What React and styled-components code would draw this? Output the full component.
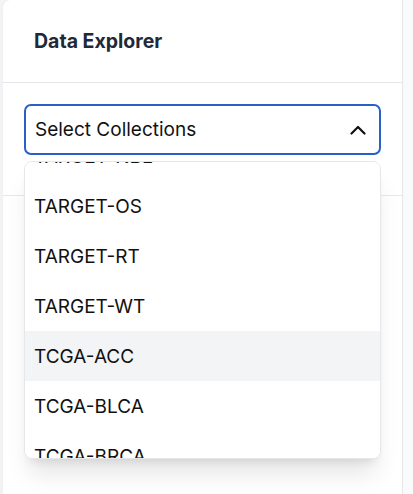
import { useLayoutEffect, useRef } from "react";
import styled, { createGlobalStyle } from "styled-components";

const GlobalStyle = createGlobalStyle`
  html, body {
    margin: 0;
    padding: 0;
    background: #f3f4f6;
    font-family: Inter, "Noto Sans", "Liberation Sans", sans-serif;
  }
  * {
    box-sizing: border-box;
  }
`;

const Page = styled.div`
  display: flex;
  height: 494px;
  padding-left: 3px;
  background: #f3f4f6;
  overflow: hidden;
`;

const Sidebar = styled.aside`
  width: 400px;
  flex-shrink: 0;
  display: flex;
  flex-direction: column;
  background: #ffffff;
  border-right: 1px solid #e5e7eb;
  border-top-left-radius: 8px;
  box-shadow: 0 0 4px rgba(0, 0, 0, 0.04);
`;

const Main = styled.main`
  flex: 1;
  background: #f9fafb;
`;

const Header = styled.header`
  height: 83px;
  display: flex;
  align-items: center;
  padding: 0 31px 1px;
  border-bottom: 1px solid #e5e7eb;
`;

const Title = styled.h1`
  margin: 0;
  font-size: 19.5px;
  font-weight: 700;
  color: #1f2937;
`;

const Section = styled.section`
  position: relative;
  padding: 21px 21px 40px;
  border-bottom: 1px solid #e5e7eb;
`;

const SelectBox = styled.button`
  width: 357px;
  height: 51px;
  display: flex;
  align-items: center;
  justify-content: space-between;
  padding: 0 13px 0 9px;
  background: #ffffff;
  border: 2px solid #2b5fc7;
  border-radius: 7px;
  font-family: inherit;
  font-size: 19px;
  color: #111111;
  cursor: pointer;
`;

const Chevron = styled.svg`
  width: 16px;
  height: 10px;
`;

const Dropdown = styled.ul`
  position: absolute;
  top: 78px;
  left: 21px;
  width: 357px;
  height: 298px;
  margin: 0;
  padding: 0;
  list-style: none;
  background: #ffffff;
  border: 1px solid #e5e7eb;
  border-radius: 8px;
  box-shadow: 0 20px 25px -5px rgba(0, 0, 0, 0.1),
    0 8px 10px -6px rgba(0, 0, 0, 0.1);
  overflow: hidden;
  z-index: 10;
`;

const Option = styled.li`
  height: 50px;
  display: flex;
  align-items: center;
  padding: 0 9px;
  font-size: 19px;
  color: #111111;
  background: ${(p) => (p.$active ? "#f3f4f6" : "#ffffff")};
  cursor: pointer;
`;

const collections = [
  "4D-Lung",
  "ACRIN-6698",
  "CPTAC-LUAD",
  "LIDC-IDRI",
  "NSCLC-Radiomics",
  "TARGET-AML",
  "TARGET-NBL",
  "TARGET-OS",
  "TARGET-RT",
  "TARGET-WT",
  "TCGA-ACC",
  "TCGA-BLCA",
  "TCGA-BRCA",
  "TCGA-CESC",
  "TCGA-COAD",
];

function App() {
  const listRef = useRef(null);

  // keep the list scrolled to where TARGET-OS sits near the top
  useLayoutEffect(() => {
    const list = listRef.current;
    if (!list) return;
    const target = list.querySelector('[data-name="TARGET-OS"]');
    if (target) list.scrollTop = target.offsetTop - 19;
  }, []);

  return (
    <>
      <GlobalStyle />
      <Page>
        <Sidebar>
          <Header>
            <Title>Data Explorer</Title>
          </Header>
          <Section>
            <SelectBox type="button">
              <span>Select Collections</span>
              <Chevron viewBox="0 0 16 10" fill="none">
                <path
                  d="M1.5 8.5 L8 2 L14.5 8.5"
                  stroke="#111"
                  strokeWidth="2.2"
                  strokeLinecap="round"
                  strokeLinejoin="round"
                />
              </Chevron>
            </SelectBox>
            <Dropdown ref={listRef}>
              {collections.map((name) => (
                <Option
                  key={name}
                  data-name={name}
                  $active={name === "TCGA-ACC"}
                >
                  {name}
                </Option>
              ))}
            </Dropdown>
          </Section>
        </Sidebar>
        <Main />
      </Page>
    </>
  );
}

export default App;
